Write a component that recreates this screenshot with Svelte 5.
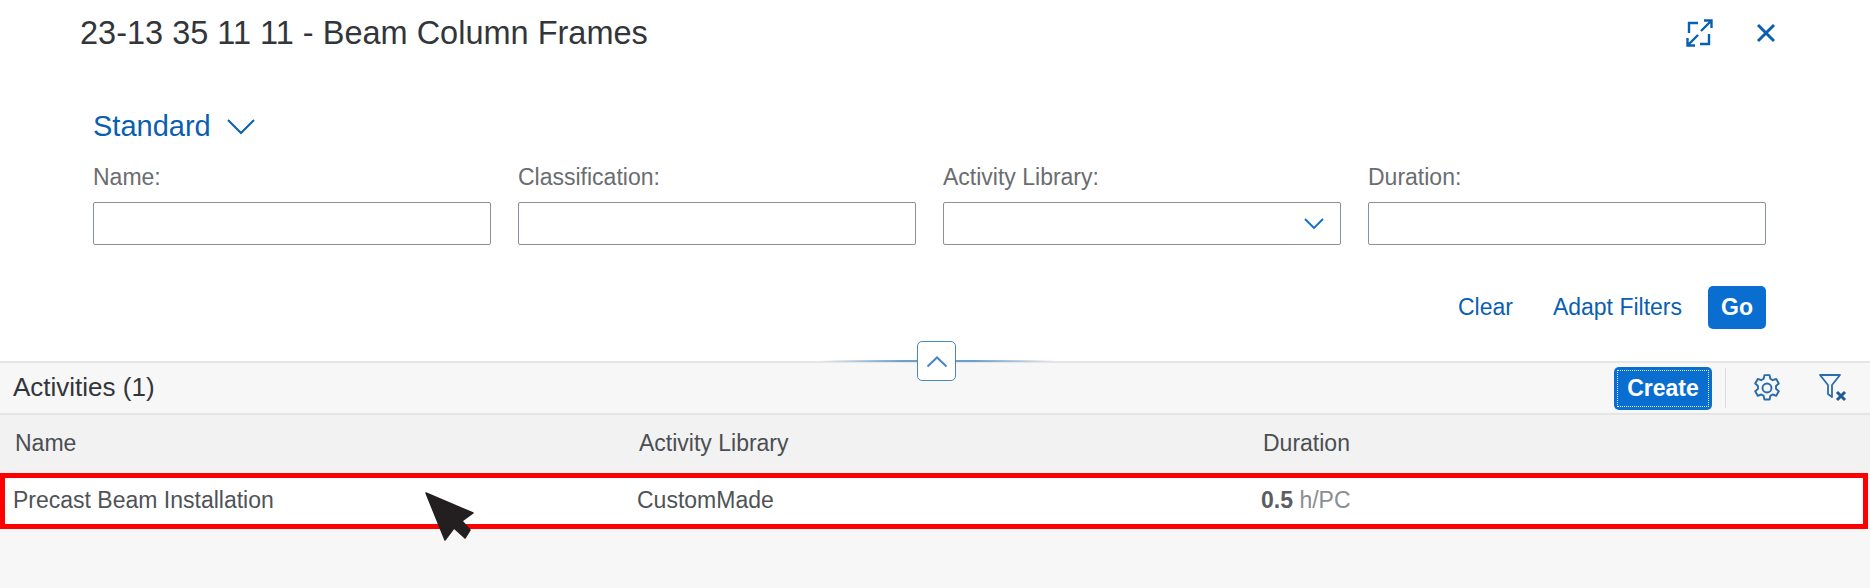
<script>
  const columns = [
    { label: "Name:" },
    { label: "Classification:" },
    { label: "Activity Library:", select: true },
    { label: "Duration:" }
  ];
</script>

<main class="page">
  <section class="top">
    <header class="title-bar">
      <h1>23-13 35 11 11 - Beam Column Frames</h1>
      <div class="title-actions">
        <svg width="30" height="30" viewBox="0 0 30 30" fill="none" stroke="#0a5fb0" stroke-width="2.4">
          <path d="M14 5H5v10M16 26h9V16M17 13 27 3M20 2.500h7.500V10M14 17 4 27M11 27.500H3.500V20" />
        </svg>
        <svg width="22" height="22" viewBox="0 0 22 22" fill="none" stroke="#0a5fb0" stroke-width="3">
          <path d="M3 3l16 16M19 3 3 19" />
        </svg>
      </div>
    </header>

    <div class="variant">
      <span>Standard</span>
      <svg width="30" height="18" viewBox="0 0 30 18" fill="none" stroke="#0a5fb0" stroke-width="2">
        <path d="M2 3l13 13L28 3" />
      </svg>
    </div>

    <div class="filters">
      {#each columns as col}
        <div class="field">
          <span class="field-label">{col.label}</span>
          <div class="input">
            {#if col.select}
              <svg width="20" height="12" viewBox="0 0 20 12" fill="none" stroke="#0a6ed1" stroke-width="1.800">
                <path d="M1 1l9 9 9-9" />
              </svg>
            {/if}
          </div>
        </div>
      {/each}
    </div>

    <div class="filter-actions">
      <span class="link clear">Clear</span>
      <span class="link">Adapt Filters</span>
      <span class="go">Go</span>
    </div>
  </section>

  <div class="splitter">
    <span class="collapse">
      <svg width="22" height="13" viewBox="0 0 22 13" fill="none" stroke="#4a86c0" stroke-width="2">
        <path d="M1.500 11.500 11 2.500l9.500 9" />
      </svg>
    </span>
  </div>

  <section class="toolbar">
    <h2>Activities (1)</h2>
    <div class="tools">
      <span class="create"><span class="create-inner">Create</span></span>
      <span class="sep"></span>
      <svg class="gear" width="30" height="30" viewBox="0 0 28 28" fill="none" stroke="#2a6cab" stroke-width="1.800" stroke-linejoin="round">
        <path d="M11.600 2h4.800l.7 3.400 2.200 1.300 3.300-1.100 2.400 4.200-2.600 2.300v2.600l2.600 2.300-2.400 4.200-3.300-1.100-2.200 1.300-.7 3.400h-4.800l-.7-3.400-2.200-1.300-3.300 1.100-2.400-4.200 2.600-2.300v-2.600L3 9.800l2.400-4.200 3.300 1.100 2.200-1.300z" />
        <circle cx="14" cy="14" r="4.200" />
      </svg>
      <svg class="filter" width="32" height="30" viewBox="0 0 32 30" fill="none">
        <path d="M2 2h20l-8 10v12l-4-3v-9z" stroke="#2a6cab" stroke-width="1.800" stroke-linejoin="round" />
        <path d="M19 19l8 8M27 19l-8 8" stroke="#1d5c99" stroke-width="3" />
      </svg>
    </div>
  </section>

  <div class="table-head">
    <span class="col-name">Name</span>
    <span class="col-lib">Activity Library</span>
    <span class="col-dur">Duration</span>
  </div>

  <div class="table-row">
    <span class="col-name">Precast Beam Installation</span>
    <span class="col-lib">CustomMade</span>
    <span class="col-dur"><b>0.5</b> <i>h/PC</i></span>
  </div>

  <svg class="cursor" width="50" height="50" viewBox="0 0 50 50">
    <path d="M1 1 48 21 37 29 45 38 40 46 29 36 20 48z" fill="#231f20" stroke="#231f20" stroke-width="1.500" stroke-linejoin="round" />
  </svg>
</main>

<style>
  :global(body) {
    margin: 0;
    background: #f7f7f7;
  }

  .page {
    position: relative;
    height: 588px;
    overflow: hidden;
    font-family: "Liberation Sans", Arial, sans-serif;
    color: #32363a;
  }

  .top {
    height: 361px;
    box-sizing: border-box;
    background: #fff;
    padding: 0 104px 0 93px;
    display: flex;
    flex-direction: column;
  }

  .title-bar {
    height: 66px;
    display: flex;
    align-items: center;
    justify-content: space-between;
    margin-left: -13px;
    margin-right: -11px;
  }

  h1 {
    margin: 0;
    font-size: 32.500px;
    font-weight: 400;
  }

  .title-actions {
    display: flex;
    align-items: center;
    gap: 41px;
  }

  .variant {
    margin-top: 44px;
    height: 32px;
    display: flex;
    align-items: center;
    gap: 15px;
    color: #0a5fb0;
    font-size: 29px;
  }

  .filters {
    margin-top: 22px;
    display: grid;
    grid-template-columns: repeat(4, 398px);
    gap: 27px;
  }

  .field {
    display: flex;
    flex-direction: column;
    gap: 12px;
  }

  .field-label {
    height: 26px;
    line-height: 26px;
    font-size: 23px;
    color: #6a6d70;
  }

  .input {
    height: 43px;
    box-sizing: border-box;
    background: #fff;
    border: 1px solid #89919a;
    border-radius: 2px;
    display: flex;
    align-items: center;
    justify-content: flex-end;
    padding-right: 16px;
  }

  .filter-actions {
    margin-top: 41px;
    display: flex;
    align-items: center;
    justify-content: flex-end;
  }

  .link {
    color: #0a5fb0;
    font-size: 23px;
    margin-right: 26px;
  }

  .clear {
    margin-right: 40px;
  }

  .go {
    width: 58px;
    height: 43px;
    border-radius: 5px;
    background: #0a6ed1;
    color: #fff;
    font-size: 23px;
    font-weight: 700;
    display: flex;
    align-items: center;
    justify-content: center;
  }

  .splitter {
    position: relative;
    height: 0;
  }

  .splitter::before {
    content: "";
    position: absolute;
    left: 820px;
    width: 236px;
    top: -1px;
    height: 2px;
    background: linear-gradient(90deg, transparent, #6e9ecb 35%, #6e9ecb 65%, transparent);
  }

  .collapse {
    position: absolute;
    left: 917px;
    top: -20px;
    width: 39px;
    height: 40px;
    box-sizing: border-box;
    background: #fff;
    border: 1.500px solid #4a86c0;
    border-radius: 5px;
    display: flex;
    align-items: center;
    justify-content: center;
  }

  .toolbar {
    height: 54px;
    box-sizing: border-box;
    background: #f7f7f7;
    border-top: 2px solid #e6e6e6;
    border-bottom: 2px solid #e5e5e5;
    display: flex;
    align-items: center;
    justify-content: space-between;
    padding: 0 20px 0 13px;
  }

  h2 {
    margin: 0 0 2px;
    font-size: 26px;
    font-weight: 400;
  }

  .tools {
    display: flex;
    align-items: center;
  }

  .create {
    width: 98px;
    height: 43px;
    box-sizing: border-box;
    padding: 3px;
    border-radius: 5px;
    background: #0a6ed1;
    color: #fff;
    font-size: 23px;
    font-weight: 700;
  }

  .create-inner {
    height: 100%;
    box-sizing: border-box;
    border: 1px dotted #e3ecf5;
    display: flex;
    align-items: center;
    justify-content: center;
  }

  .sep {
    width: 1px;
    height: 40px;
    background: #dcdcdc;
    margin: 0 26px 0 13px;
  }

  .filter {
    margin-left: 36px;
  }

  .table-head,
  .table-row {
    display: grid;
    grid-template-columns: 624px 624px 1fr;
    align-items: center;
    font-size: 23px;
  }

  .table-head {
    height: 58px;
    box-sizing: border-box;
    background: #f2f2f2;
    padding: 0 0 2px 15px;
    color: #4b4f53;
  }

  .table-row {
    height: 56px;
    box-sizing: border-box;
    margin-right: 2px;
    background: #fff;
    border: 5px solid #ff0000;
    padding: 0 0 1px 8px;
    color: #4f5357;
  }

  b {
    font-weight: 700;
    color: #5a5e62;
  }

  i {
    font-style: normal;
    color: #8b8e91;
  }

  .cursor {
    position: absolute;
    left: 425px;
    top: 492px;
  }
</style>
